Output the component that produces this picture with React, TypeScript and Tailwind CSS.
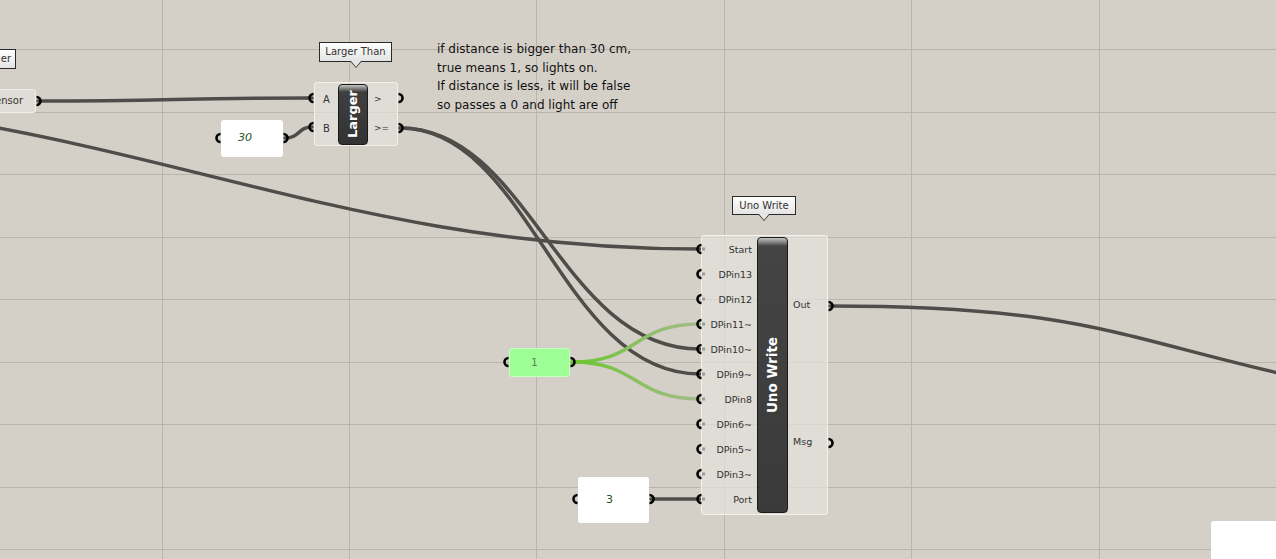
import React from 'react';

const gridX = [162, 349, 536, 724, 911, 1099];
const gridY = [49, 112, 174, 237, 299, 362, 424, 487, 549];

const unoInputs = [
  { label: 'Start', y: 249 },
  { label: 'DPin13', y: 274 },
  { label: 'DPin12', y: 299 },
  { label: 'DPin11~', y: 324 },
  { label: 'DPin10~', y: 349 },
  { label: 'DPin9~', y: 374 },
  { label: 'DPin8', y: 399 },
  { label: 'DPin6~', y: 424 },
  { label: 'DPin5~', y: 449 },
  { label: 'DPin3~', y: 474 },
  { label: 'Port', y: 499 },
];

// grips: x, y, side ('in' opens to the right, 'out' opens to the left)
const grips: { x: number; y: number; side: 'in' | 'out' }[] = [
  { x: 38, y: 101, side: 'out' },
  { x: 312, y: 98, side: 'in' },
  { x: 312, y: 127, side: 'in' },
  { x: 400, y: 98, side: 'out' },
  { x: 400, y: 128, side: 'out' },
  { x: 219, y: 138, side: 'in' },
  { x: 285, y: 138, side: 'out' },
  { x: 507, y: 362, side: 'in' },
  { x: 572, y: 362, side: 'out' },
  { x: 576, y: 499, side: 'in' },
  { x: 651, y: 499, side: 'out' },
  { x: 830, y: 306, side: 'out' },
  { x: 830, y: 443, side: 'out' },
  ...unoInputs.map((p) => ({ x: 700, y: p.y, side: 'in' as const })),
];

function gripPath(g: { x: number; y: number; side: 'in' | 'out' }) {
  return g.side === 'in'
    ? `M ${g.x + 1.5} ${g.y - 4} A 4 4 0 0 0 ${g.x + 1.5} ${g.y + 4}`
    : `M ${g.x - 1.5} ${g.y - 4} A 4 4 0 0 1 ${g.x - 1.5} ${g.y + 4}`;
}

function Tooltip({ text, className }: { text: string; className: string }) {
  return (
    <div className={`absolute ${className}`}>
      <div className="relative h-full w-full border border-[#2a2a2a] bg-gradient-to-b from-white to-[#e4e4e4] text-center text-[10px] leading-[17px] text-[#333]">
        {text}
        <div className="absolute left-1/2 top-full -translate-x-1/2 h-0 w-0 border-x-[6px] border-t-[7px] border-x-transparent border-t-[#2a2a2a]" />
        <div className="absolute left-1/2 top-full -translate-x-1/2 h-0 w-0 border-x-[5px] border-t-[6px] border-x-transparent border-t-[#e6e6e6]" />
      </div>
    </div>
  );
}

export default function App() {
  return (
    <div
      className="relative h-[559px] w-[1276px] overflow-hidden bg-[#d4d0c8]"
      style={{ fontFamily: '"DejaVu Sans", "Liberation Sans", sans-serif' }}
    >
      {/* grid + wires */}
      <svg className="absolute inset-0 pointer-events-none" width="1276" height="559">
        <defs>
          <linearGradient id="green1" x1="572" y1="0" x2="700" y2="0" gradientUnits="userSpaceOnUse">
            <stop offset="0" stopColor="#6cc630" />
            <stop offset="1" stopColor="#a6ba8c" />
          </linearGradient>
        </defs>
        {gridX.map((x) => (
          <line key={`x${x}`} x1={x + 0.5} y1={0} x2={x + 0.5} y2={559} stroke="#b9b5ad" strokeWidth="1" />
        ))}
        {gridY.map((y) => (
          <line key={`y${y}`} x1={0} y1={y + 0.5} x2={1276} y2={y + 0.5} stroke="#b9b5ad" strokeWidth="1" />
        ))}
        <g fill="none" stroke="#4f4d49" strokeWidth="3.5" strokeLinecap="round">
          <path d="M 38 101 C 170 101 180 98 312 98" />
          <path d="M -350 95 C 100 95 300 249 700 249" />
          <path d="M 400 128 C 530 128 560 349 700 349" />
          <path d="M 400 128 C 530 128 560 374 700 374" />
          <path d="M 285 138 C 300 138 298 127 312 127" />
          <path d="M 651 499 L 700 499" />
          <path d="M 830 306 C 1080 306 1120 338 1300 378" />
        </g>
        <g fill="none" stroke="url(#green1)" strokeWidth="3.5" strokeLinecap="round">
          <path d="M 572 362 C 640 362 632 324 700 324" />
          <path d="M 572 362 C 640 362 632 399 700 399" />
        </g>
      </svg>

      {/* comment */}
      <div className="absolute left-[437px] top-[40px] text-[12px] leading-[18.5px] text-[#111]">
        <div>if distance is bigger than 30 cm,</div>
        <div>true means 1, so lights on.</div>
        <div>If distance is less, it will be false</div>
        <div>so passes a 0 and light are off</div>
      </div>

      {/* left partial tooltip & sensor component */}
      <div className="absolute left-[-40px] top-[49px] h-[20px] w-[56px] border border-[#2a2a2a] bg-gradient-to-b from-white to-[#e4e4e4] pr-[4px] text-right text-[10px] leading-[18px] text-[#333]">
        er
      </div>
      <div className="absolute left-[-30px] top-[89px] h-[24px] w-[66px] rounded-[3px] border border-[#f0efea] bg-[#e2e0da]/80 pr-[12px] text-right text-[10px] leading-[22px] text-[#333]">
        ensor
      </div>

      {/* Larger Than */}
      <Tooltip text="Larger Than" className="left-[319px] top-[42px] h-[20px] w-[73px]" />
      <div className="absolute left-[314px] top-[82px] flex h-[64px] w-[84px] rounded-[3px] border border-[#f2f1ec] bg-[#e4e2dc]/70">
        <div className="flex w-[23px] flex-col justify-around py-[2px] pl-[8px] text-[10px] text-[#333]">
          <span>A</span>
          <span>B</span>
        </div>
        <div className="flex h-[61px] w-[30px] items-center justify-center self-center rounded-[4px] border border-[#1a1a1a] bg-[linear-gradient(to_bottom,#c4c4c4_0px,#777_4px,#3f3f3f_7px,#333_100%)]">
          <span className="rotate-180 text-[13px] font-bold text-white [writing-mode:vertical-rl]">Larger</span>
        </div>
        <div className="flex flex-col justify-around py-[2px] pl-[6px] text-[9px] text-[#333]">
          <span>&gt;</span>
          <span>&gt;=</span>
        </div>
      </div>

      {/* panel 30 */}
      <div className="absolute left-[221px] top-[120px] flex h-[37px] w-[62px] items-center justify-center rounded-[3px] bg-white pr-[14px] text-[11px] italic text-[#245224]">
        30
      </div>

      {/* panel 1 */}
      <div className="absolute left-[509px] top-[348px] flex h-[29px] w-[61px] items-center justify-center rounded-[3px] border border-[#c6ffc2] bg-[#9cfe94] pr-[10px] text-[10px] text-[#5b7a58]">
        1
      </div>

      {/* panel 3 */}
      <div className="absolute left-[578px] top-[477px] flex h-[46px] w-[71px] items-center justify-center rounded-[3px] bg-white pr-[8px] text-[11px] text-[#245224]">
        3
      </div>

      {/* Uno Write */}
      <Tooltip text="Uno Write" className="left-[732px] top-[196px] h-[19px] w-[64px]" />
      <div className="absolute left-[701px] top-[235px] flex h-[280px] w-[127px] rounded-[3px] border border-[#f2f1ec] bg-[#e4e2dc]/70">
        <div className="flex w-[55px] flex-col items-end pr-[5px] pt-[2px] text-[9.5px] text-[#333]">
          {unoInputs.map((p) => (
            <div key={p.label} className="flex h-[25px] items-center">
              {p.label}
            </div>
          ))}
        </div>
        <div className="flex h-[276px] w-[31px] items-center justify-center self-center rounded-[4px] border border-[#1a1a1a] bg-[linear-gradient(to_bottom,#c4c4c4_0px,#777_5px,#444_8px,#3a3a3a_100%)]">
          <span className="rotate-180 text-[13.5px] font-bold text-white [writing-mode:vertical-rl]">Uno Write</span>
        </div>
        <div className="flex flex-1 flex-col gap-[125px] pl-[5px] pt-[63px] text-[9.5px] leading-[12px] text-[#333]">
          <span>Out</span>
          <span>Msg</span>
        </div>
      </div>

      {/* bottom-right white panel */}
      <div className="absolute left-[1211px] top-[521px] h-[40px] w-[70px] rounded-tl-[3px] bg-white" />

      {/* grips */}
      <svg className="absolute inset-0 pointer-events-none" width="1276" height="559">
        {grips.map((g, i) => (
          <g key={i}>
            <path d={gripPath(g)} fill="none" stroke="#000" strokeWidth="2.6" />
            {g.side === 'in' && g.x === 700 && (
              <rect x={g.x + 2} y={g.y - 1.5} width="3" height="3" fill="#9a9a9a" />
            )}
          </g>
        ))}
      </svg>
    </div>
  );
}
